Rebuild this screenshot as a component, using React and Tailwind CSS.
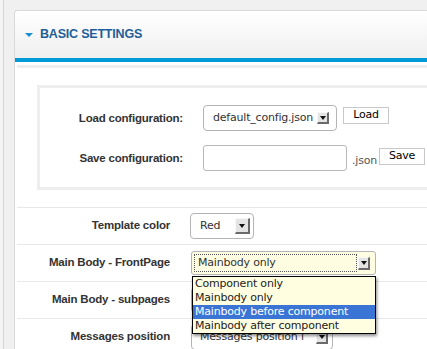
import React from "react";

function Arrow({ w = 12, h = 12 }) {
  return (
    <div
      className="flex items-center justify-center bg-[#e4e4e4] border-t border-l border-t-[#f8f8f8] border-l-[#f8f8f8] border-r-2 border-b-2 border-r-[#6a6a6a] border-b-[#6a6a6a] shrink-0"
      style={{ width: w, height: h }}
    >
      <svg width="6" height="4" viewBox="0 0 6 4">
        <path d="M0 0 L6 0 L3 4 Z" fill="#111" />
      </svg>
    </div>
  );
}

const ctl = "font-['DejaVu_Sans',sans-serif] text-[11px] tracking-[-0.2px]";
const lbl = "text-right text-[11.5px] tracking-[-0.2px] font-bold text-[#333]";

export default function App() {
  return (
    <div className="w-[427px] h-[349px] overflow-hidden bg-[#f0f0f0] flex font-['Liberation_Sans',Arial,sans-serif]">
      <div className="w-[3px] shrink-0 bg-[#f4f4f4]" />
      <div className="w-px shrink-0 bg-[#d6d6d6]" />
      <div className="w-[10px] shrink-0" />
      <div className="mt-[10px] w-[640px] shrink-0 rounded-tl-[4px] border-l border-t border-[#d9d9d9] bg-white">
        <div className="h-[47px] bg-gradient-to-b from-white to-[#efefef] flex items-center pl-[10px] rounded-tl-[4px]">
          <svg width="8" height="4" viewBox="0 0 8 4" className="mt-[1px]">
            <path d="M0 0 L8 0 L4 4 Z" fill="#1a8fd0" />
          </svg>
          <span className="ml-[7px] text-[12.5px] font-bold text-[#1f5e98] tracking-[-0.2px]">BASIC SETTINGS</span>
        </div>
        <div className="h-[4px] bg-[#009bd7]" />
        <div className="pl-[2px] pt-[3px]">
          <div className="border-t-[3px] border-[#eeeeee] pt-[17px]">
            <div className="ml-[20px] w-[520px] border-[3px] border-[#eeeeee] pt-[17px] pb-[16px]">
              <div className="flex items-start h-[26px]">
                <div className={`w-[143px] leading-[26px] ${lbl}`}>Load configuration:</div>
                <div className={`ml-[20px] w-[134px] h-[26px] rounded-[4px] border border-[#b4b4b4] bg-white flex items-center pl-[9px] pr-[7px] justify-between text-[#333] ${ctl}`}>
                  <span>default_config.json</span>
                  <Arrow w={12} h={12} />
                </div>
                <div className={`ml-[6px] mt-[2px] w-[46px] h-[17px] border border-[#c8c8c8] bg-white flex items-center justify-center text-black ${ctl}`}>Load</div>
              </div>
              <div className="flex items-start h-[26px] mt-[14px]">
                <div className={`w-[143px] leading-[26px] ${lbl}`}>Save configuration:</div>
                <div className="ml-[20px] w-[144px] h-[26px] rounded-[3px] border border-[#b8b8b8] bg-white" />
                <span className={`ml-[5px] mt-[8px] text-[#555] ${ctl}`}>.json</span>
                <div className={`ml-[2px] mt-[3px] w-[46px] h-[17px] border border-[#c8c8c8] bg-white flex items-center justify-center text-black ${ctl}`}>Save</div>
              </div>
            </div>
            <div className="mt-[17px] border-t border-[#e8e8e8]">
              <div className="h-[37px] border-b border-[#e8e8e8] flex items-center">
                <div className={`w-[153px] ${lbl}`}>Template color</div>
                <div className={`ml-[20px] w-[64px] h-[26px] rounded-[4px] border border-[#b4b4b4] bg-white flex items-center pl-[9px] pr-[3px] justify-between text-[#333] ${ctl}`}>
                  <span>Red</span>
                  <Arrow w={15} h={16} />
                </div>
              </div>
              <div className="h-[37px] border-b border-[#e8e8e8] flex items-center">
                <div className={`w-[153px] ${lbl}`}>Main Body - FrontPage</div>
                <div className="relative ml-[21px]">
                  <div className={`w-[185px] h-[24px] rounded-[3px] border border-[#b4b4b4] bg-[#fefde2] flex items-center pl-[2px] pr-[5px] text-[#333] ${ctl}`}>
                    <div className="w-[163px] h-[18px] border border-dotted border-[#555] flex items-center pl-[3px]">Mainbody only</div>
                    <div className="ml-[1px]"><Arrow w={12} h={13} /></div>
                  </div>
                  <div className={`absolute left-[1px] top-[25px] w-[184px] border border-black bg-[#fffee0] shadow-[1px_2px_3px_rgba(0,0,0,0.45)] z-10 text-[#222] ${ctl}`}>
                    <div className="h-[14px] leading-[14px] pl-[2px]">Component only</div>
                    <div className="h-[14px] leading-[14px] pl-[2px]">Mainbody only</div>
                    <div className="h-[14px] leading-[14px] pl-[2px] bg-[#3a75d6] text-white">Mainbody before component</div>
                    <div className="h-[14px] leading-[14px] pl-[2px]">Mainbody after component</div>
                  </div>
                </div>
              </div>
              <div className="h-[37px] border-b border-[#e8e8e8] flex items-center">
                <div className={`w-[153px] ${lbl}`}>Main Body - subpages</div>
                <div className="ml-[21px] w-[185px] h-[26px] rounded-[4px] border border-[#b4b4b4] bg-white flex items-center pr-[5px] justify-end">
                  <Arrow w={12} h={13} />
                </div>
              </div>
              <div className="h-[37px] border-b border-[#e8e8e8] flex items-center">
                <div className={`w-[153px] ${lbl}`}>Messages position</div>
                <div className={`ml-[21px] w-[142px] h-[26px] rounded-[4px] border border-[#b4b4b4] bg-white flex items-center pl-[8px] pr-[4px] justify-between text-[#333] ${ctl}`}>
                  <span className="whitespace-nowrap overflow-hidden">Messages position l</span>
                  <Arrow w={12} h={13} />
                </div>
              </div>
            </div>
          </div>
        </div>
      </div>
    </div>
  );
}
